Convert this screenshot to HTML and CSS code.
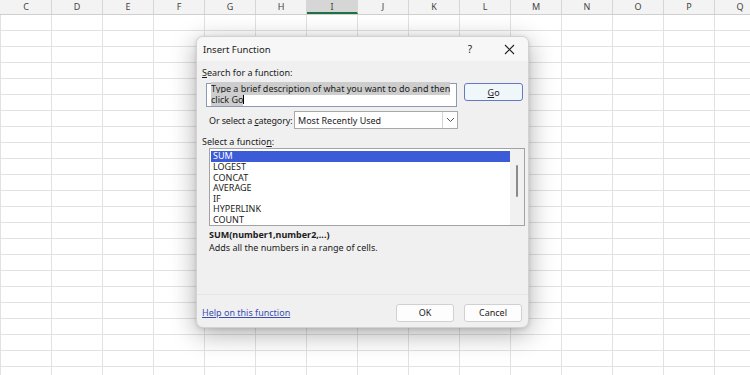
FILE: index.html
```html
<!DOCTYPE html>
<html lang="en">
  <head>
    <meta charset="UTF-8" />
    <meta name="viewport" content="width=device-width, initial-scale=1.0" />
    <title>Insert Function</title>
    <link rel="stylesheet" href="styles.css">
  </head>
  <body>
    <div class="sheet">
      <div class="col-headers">
        <div class="col">C</div>
        <div class="col">D</div>
        <div class="col">E</div>
        <div class="col">F</div>
        <div class="col">G</div>
        <div class="col">H</div>
        <div class="col selected">I</div>
        <div class="col">J</div>
        <div class="col">K</div>
        <div class="col">L</div>
        <div class="col">M</div>
        <div class="col">N</div>
        <div class="col">O</div>
        <div class="col">P</div>
        <div class="col">Q</div>
      </div>
      <div class="cells"></div>
    </div>

    <!-- dialog floats over the worksheet -->
    <div class="dialog">
      <div class="titlebar">
        <span class="title">Insert Function</span>
        <span class="help">?</span>
        <span class="close">
          <svg width="11" height="11" viewBox="0 0 11 11">
            <path d="M1 1 L10 10 M10 1 L1 10" stroke="#222" stroke-width="1.1" fill="none" />
          </svg>
        </span>
      </div>

      <div class="dialog-body">
        <div class="label"><u>S</u>earch for a function:</div>

        <div class="search-row">
          <div class="search-box">
            <span class="sel">Type a brief description of what you want to do and then</span><br />
            <span class="sel">click Go</span><span class="caret"></span>
          </div>
          <button class="btn go"><u>G</u>o</button>
        </div>

        <div class="category-row">
          <span class="category-label">Or select a <u>c</u>ategory:</span>
          <div class="select">
            <span class="select-value">Most Recently Used</span>
            <span class="select-arrow">
              <svg width="9" height="6" viewBox="0 0 9 6">
                <path d="M1 1 L4.5 4.5 L8 1" stroke="#555" stroke-width="1" fill="none" />
              </svg>
            </span>
          </div>
        </div>

        <div class="label list-label">Select a functio<u>n</u>:</div>

        <div class="listbox">
          <ul class="items">
            <li class="active">SUM</li>
            <li>LOGEST</li>
            <li>CONCAT</li>
            <li>AVERAGE</li>
            <li>IF</li>
            <li>HYPERLINK</li>
            <li>COUNT</li>
          </ul>
          <div class="scrollbar"><div class="thumb"></div></div>
        </div>

        <div class="syntax">SUM(number1,number2,...)</div>
        <div class="desc">Adds all the numbers in a range of cells.</div>
      </div>

      <div class="footer">
        <a href="#" class="help-link">Help on this function</a>
        <div class="footer-buttons">
          <button class="btn">OK</button>
          <button class="btn">Cancel</button>
        </div>
      </div>
    </div>
  </body>
</html>
```

FILE: styles.css
```css
:root {
  --grid-line: #e2e2e2;
  --header-bg: #f3f3f3;
  --dialog-bg: #f0f0f0;
  --text-color: #1b1b1b;
  --select-blue: #3b5bd7;
  --link-blue: #3a4db3;
}

* {
  box-sizing: border-box;
}

body {
  margin: 0;
  width: 750px;
  height: 375px;
  overflow: hidden;
  background: #ffffff;
  font-family: "Noto Sans", "Open Sans", sans-serif;
  color: var(--text-color);
}

/* worksheet */
.sheet {
  width: 750px;
  height: 375px;
  display: flex;
  flex-direction: column;
}

.col-headers {
  display: flex;
  height: 15px;
  padding-left: 1px;
  background: var(--header-bg);
  border-bottom: 1px solid #cfcfcf;
}

.col {
  flex: 0 0 51px;
  border-right: 1px solid #d6d6d6;
  font-size: 9px;
  line-height: 14px;
  text-align: center;
  color: #444;
}

.col.selected {
  background: #d6d6d6;
  border-bottom: 2px solid #1e7145;
}

.cells {
  flex: 1;
  background-color: #fff;
  background-image: linear-gradient(to right, var(--grid-line) 1px, transparent 1px),
    linear-gradient(to bottom, transparent 15px, var(--grid-line) 15px);
  background-size: 51px 16px, 51px 16px;
  background-position: 0 0, 0 0;
}

/* dialog */
.dialog {
  position: absolute;
  left: 196px;
  top: 36px;
  width: 333px;
  height: 292px;
  background: var(--dialog-bg);
  border: 1px solid #d2d2d2;
  border-radius: 7px;
  box-shadow: 0 6px 26px rgba(0, 0, 0, 0.32), 0 1px 4px rgba(0, 0, 0, 0.12);
  display: flex;
  flex-direction: column;
  font-size: 9px;
  overflow: hidden;
}

.titlebar {
  height: 24px;
  display: flex;
  align-items: center;
  padding-left: 6px;
  background: #f7f7f7;
}

.title {
  flex: 1;
  font-size: 9.5px;
  padding-top: 1px;
}

.help {
  width: 20px;
  text-align: center;
  font-size: 10px;
  margin-right: 14px;
}

.close {
  width: 30px;
  display: flex;
  justify-content: center;
  margin-right: 4px;
}

.dialog-body {
  flex: 1;
  padding: 6px 5px 0 5px;
}

.label {
  line-height: 12px;
}

.search-row {
  display: flex;
  align-items: flex-start;
  margin-top: 4px;
  padding-left: 4px;
}

.search-box {
  width: 252px;
  height: 24px;
  background: #fff;
  border: 1px solid #8d98b3;
  padding: 0 4px;
  line-height: 10.5px;
  white-space: nowrap;
}

.sel {
  background: #cdcdcd;
}

.caret {
  display: inline-block;
  width: 1px;
  height: 9px;
  background: #000;
  vertical-align: -1px;
}

.btn {
  font-family: inherit;
  font-size: 9px;
  color: var(--text-color);
  background: #fdfdfd;
  border: 1px solid #d0d0d0;
  border-radius: 3px;
  padding: 0;
  height: 18px;
}

.btn.go {
  width: 59px;
  margin-left: 7px;
  background: #f0f7fb;
  border: 1px solid #6379c2;
}

.category-row {
  display: flex;
  align-items: center;
  margin-top: 4px;
  padding-left: 7px;
  height: 18px;
}

.category-label {
  flex: 0 0 85px;
  white-space: nowrap;
  letter-spacing: -0.15px;
}

.select {
  width: 164px;
  height: 18px;
  background: #fff;
  border: 1px solid #a8a8a8;
  display: flex;
  align-items: center;
}

.select-value {
  flex: 1;
  padding-left: 3px;
}

.select-arrow {
  width: 15px;
  height: 100%;
  border-left: 1px solid #d4d4d4;
  display: flex;
  align-items: center;
  justify-content: center;
}

.list-label {
  margin-top: 7px;
}

.listbox {
  margin: 0 0 0 7px;
  width: 316px;
  height: 78px;
  background: #fff;
  border: 1px solid #a3a3a3;
  display: flex;
  padding: 2px 0 0 1px;
}

.items {
  list-style: none;
  margin: 0;
  padding: 0;
  flex: 1;
}

.items li {
  height: 10.5px;
  line-height: 10.5px;
  padding-left: 2px;
}

.items li.active {
  height: 11px;
  background: var(--select-blue);
  color: #fff;
}

.scrollbar {
  width: 14px;
  background: #f1f1f1;
  margin-top: -2px;
  display: flex;
  justify-content: center;
  padding-top: 16px;
}

.thumb {
  width: 2px;
  height: 32px;
  background: #8a8a8a;
  border-radius: 1px;
}

.syntax {
  margin: 3px 0 0 7px;
  font-weight: bold;
  line-height: 12px;
}

.desc {
  margin-left: 7px;
  line-height: 13px;
}

.footer {
  border-top: 1px solid #e6e6e6;
  height: 33px;
  display: flex;
  align-items: center;
  justify-content: space-between;
  padding: 3px 6px 0 5px;
}

.help-link {
  color: var(--link-blue);
  text-decoration: underline;
}

.footer-buttons {
  display: flex;
  gap: 10px;
}

.footer-buttons .btn {
  width: 58px;
}
```
